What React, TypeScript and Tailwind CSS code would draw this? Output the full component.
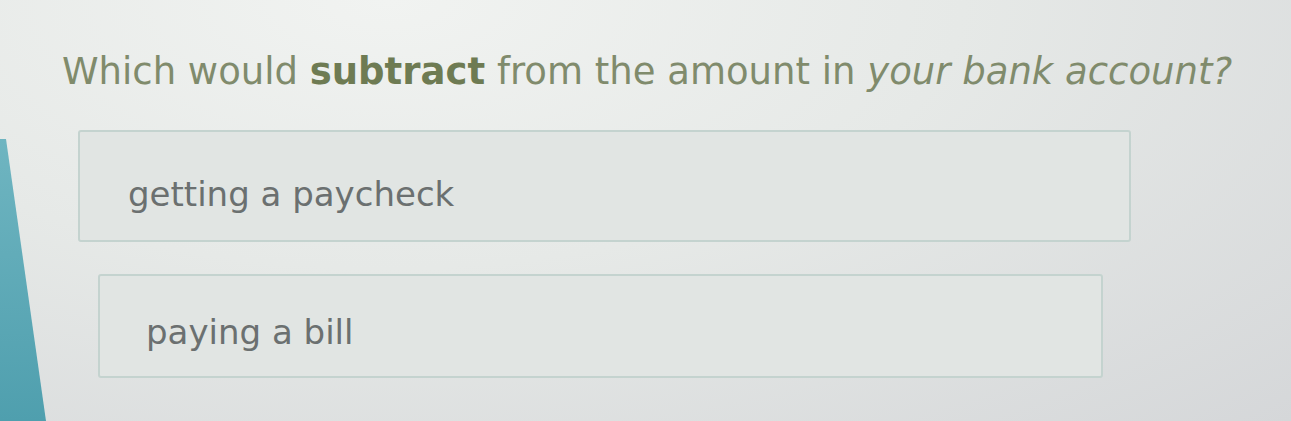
import React from 'react';

const choices = [
  { label: 'getting a paycheck', box: 'ml-[32px] mr-[160px] h-[112px] pl-[48px] pt-[16px]' },
  { label: 'paying a bill', box: 'ml-[52px] mr-[188px] h-[104px] pl-[46px] pt-[12px] mt-[32px]' },
];

export default function App() {
  return (
    <div className="flex h-[421px] w-full overflow-hidden bg-[radial-gradient(ellipse_at_30%_0%,#f1f3f1_0%,#e6e9e7_45%,#d5d7d9_100%)] font-['DejaVu_Sans',Verdana,sans-serif]">
      {/* monitor bezel edge on the left */}
      <div className="w-[46px] shrink-0 bg-[linear-gradient(180deg,#7fc0ca,#4f9fae)] [clip-path:polygon(0_33%,6px_33%,46px_100%,0_100%)]" />

      <div className="flex-1">
        <h1 className="ml-[16px] mt-[48px] text-[37px] leading-[48px] text-[#808b6c]">
          Which would <b className="font-bold text-[#6e7b53]">subtract</b> from the amount in{' '}
          <i>your bank account?</i>
        </h1>

        <div className="mt-[34px]">
          {choices.map((c) => (
            <div
              key={c.label}
              className={`flex items-center rounded-[3px] border-2 border-[#c4d3cf] bg-[#e1e5e3] text-[34px] text-[#6b7070] ${c.box}`}
            >
              {c.label}
            </div>
          ))}
        </div>
      </div>
    </div>
  );
}
